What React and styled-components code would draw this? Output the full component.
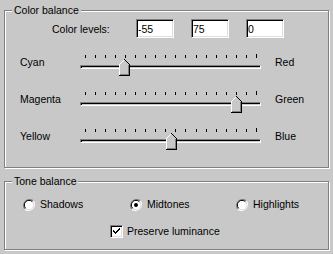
import React from 'react';
import styled, { createGlobalStyle } from 'styled-components';

const GlobalStyle = createGlobalStyle`
  html, body {
    margin: 0;
    padding: 0;
    background: #c8c8c8;
  }
  body {
    font-family: "Liberation Sans", Arial, sans-serif;
    font-size: 10.5px;
    color: #000;
  }
`;

const Dialog = styled.div`
  width: 333px;
  height: 254px;
  padding: 10px 0 0 4px;
  box-sizing: border-box;
  display: flex;
  flex-direction: column;
  gap: 13px;
`;

const Group = styled.div`
  position: relative;
  width: 325px;
  height: ${(p) => p.h}px;
  box-sizing: border-box;
  border: 1px solid #808080;
  box-shadow: 1px 1px 0 #fff, inset 1px 1px 0 #fff;
  padding: ${(p) => p.pad};
`;

// label sits over the etched border line
const Legend = styled.span`
  position: absolute;
  top: -7px;
  left: 7px;
  padding: 0 2px;
  line-height: 13px;
  background: #c8c8c8;
`;

const LevelsRow = styled.div`
  display: flex;
  align-items: center;
  padding-left: 32px;
`;

const LevelsLabel = styled.span`
  width: 84px;
`;

const Inputs = styled.div`
  display: flex;
  gap: 17px;
`;

const NumBox = styled.input`
  width: 38px;
  height: 19px;
  box-sizing: border-box;
  margin: 0;
  padding: 0 0 0 1px;
  font: inherit;
  color: #000;
  background: #fff;
  border-top: 1px solid #808080;
  border-left: 1px solid #808080;
  border-right: 1px solid #fff;
  border-bottom: 1px solid #fff;
  box-shadow: inset 1px 1px 0 #000, inset -1px -1px 0 #dfdfdf;
  outline: none;
`;

const SliderList = styled.div`
  display: flex;
  flex-direction: column;
  gap: 15px;
  margin-top: 16px;
`;

const SliderRow = styled.div`
  display: flex;
  align-items: flex-start;
  height: 22px;
`;

const SideLabel = styled.span`
  width: ${(p) => p.w}px;
  margin-top: 2px;
  line-height: 13px;
`;

const Track = styled.div`
  position: relative;
  width: 181px;
  height: 22px;
  margin-right: 14px;
`;

const Ticks = styled.div`
  display: flex;
  justify-content: space-between;
  padding: 0 4px 0 5px;
  height: 4px;
`;

const Tick = styled.span`
  width: 1px;
  height: 3px;
  margin-top: 1px;
  background: #000;
  &:last-child {
    height: 4px;
    margin-top: 0;
  }
`;

const Groove = styled.div`
  margin-top: 7px;
  height: 4px;
  box-sizing: border-box;
  border-top: 1px solid #808080;
  border-left: 1px solid #808080;
  border-bottom: 1px solid #fff;
  border-right: 1px solid #fff;
  box-shadow: inset 1px 1px 0 #000;
`;

const ThumbWrap = styled.div`
  position: absolute;
  top: 5px;
  width: 11px;
  height: 17px;
`;

const Thumb = ({ value }) => {
  const frac = (value + 100) / 200;
  return (
    <ThumbWrap style={{ left: Math.round(frac * 172) }}>
      <svg width="11" height="17" viewBox="0 0 11 17" shapeRendering="crispEdges">
        <polygon points="0,5 5,0 6,0 11,5 11,17 0,17" fill="#c8c8c8" />
        <polyline points="0.5,16 0.5,5.5 5.5,0.5" fill="none" stroke="#fff" />
        <polyline points="5.5,0.5 10.5,5.5 10.5,16.5 0,16.5" fill="none" stroke="#000" />
        <polyline points="9.5,6 9.5,15.5 1,15.5" fill="none" stroke="#808080" />
      </svg>
    </ThumbWrap>
  );
};

const Slider = ({ value }) => (
  <Track>
    <Ticks>
      {Array.from({ length: 18 }).map((_, i) => (
        <Tick key={i} />
      ))}
    </Ticks>
    <Groove />
    <Thumb value={value} />
  </Track>
);

const RadioRow = styled.div`
  display: flex;
  align-items: center;
  margin-top: 16px;
  padding-left: 18px;
`;

const Option = styled.label`
  display: flex;
  align-items: center;
  gap: 5px;
  width: ${(p) => p.w}px;
  line-height: 13px;
`;

const Radio = ({ checked }) => (
  <svg width="12" height="12" viewBox="0 0 12 12">
    <path d="M10.2 1.8 A6 6 0 0 0 1.8 10.2" fill="none" stroke="#808080" strokeWidth="1.2" />
    <path d="M1.8 10.2 A6 6 0 0 0 10.2 1.8" fill="none" stroke="#fff" strokeWidth="1.2" />
    <circle cx="6" cy="6" r="4.6" fill="#fff" />
    <path d="M9.3 2.7 A4.6 4.6 0 0 0 2.7 9.3" fill="none" stroke="#000" strokeWidth="1" />
    <path d="M2.7 9.3 A4.6 4.6 0 0 0 9.3 2.7" fill="none" stroke="#dfdfdf" strokeWidth="1" />
    {checked && <circle cx="6" cy="6" r="2" fill="#000" />}
  </svg>
);

const CheckRow = styled.div`
  display: flex;
  align-items: center;
  gap: 4px;
  margin-top: 14px;
  padding-left: 105px;
  line-height: 13px;
`;

const CheckBox = styled.span`
  width: 13px;
  height: 13px;
  box-sizing: border-box;
  background: #fff;
  border-top: 1px solid #808080;
  border-left: 1px solid #808080;
  border-right: 1px solid #fff;
  border-bottom: 1px solid #fff;
  box-shadow: inset 1px 1px 0 #000, inset -1px -1px 0 #dfdfdf;
  display: flex;
  align-items: center;
  justify-content: center;
`;

const sliders = [
  { left: 'Cyan', right: 'Red', value: -55 },
  { left: 'Magenta', right: 'Green', value: 75 },
  { left: 'Yellow', right: 'Blue', value: 0 },
];

export default function App() {
  return (
    <>
      <GlobalStyle />
      <Dialog>
        <Group h={158} pad="8px 0 0 15px">
          <Legend>Color balance</Legend>
          <LevelsRow>
            <LevelsLabel>Color levels:</LevelsLabel>
            <Inputs>
              <NumBox readOnly value="-55" />
              <NumBox readOnly value="75" />
              <NumBox readOnly value="0" />
            </Inputs>
          </LevelsRow>
          <SliderList>
            {sliders.map((s) => (
              <SliderRow key={s.left}>
                <SideLabel w={60}>{s.left}</SideLabel>
                <Slider value={s.value} />
                <SideLabel>{s.right}</SideLabel>
              </SliderRow>
            ))}
          </SliderList>
        </Group>
        <Group h={69} pad="0">
          <Legend>Tone balance</Legend>
          <RadioRow>
            <Option w={107}>
              <Radio />
              Shadows
            </Option>
            <Option w={106}>
              <Radio checked />
              Midtones
            </Option>
            <Option w={90}>
              <Radio />
              Highlights
            </Option>
          </RadioRow>
          <CheckRow>
            <CheckBox>
              <svg width="9" height="9" viewBox="0 0 9 9" shapeRendering="crispEdges">
                <path d="M1 3h1v1h1v1h1V4h1V3h1V2h1V1h1v2H7v1H6v1H5v1H4v1H3V6H2V5H1z" fill="#000" />
              </svg>
            </CheckBox>
            Preserve luminance
          </CheckRow>
        </Group>
      </Dialog>
    </>
  );
}
